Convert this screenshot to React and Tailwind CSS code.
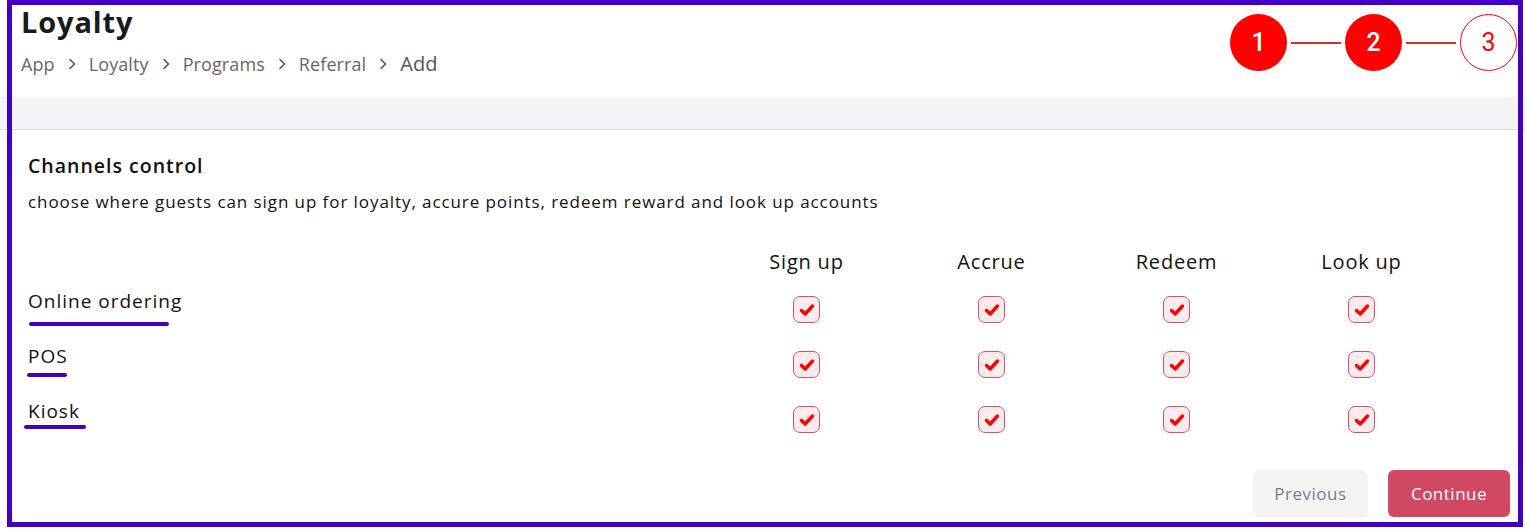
import React from "react";

const font = { fontFamily: '"Open Sans", "Noto Sans", sans-serif' };

function Check() {
  return (
    <div className="w-[27px] h-[27px] rounded-[7px] border-[1.5px] border-[#d9506a] bg-[#fbebee] flex items-center justify-center">
      <svg width="16" height="14" viewBox="0 0 16 14">
        <path d="M2.5 7.5 L6.2 11 L13.5 3" fill="none" stroke="#ff0000" strokeWidth="3.4" strokeLinecap="round" strokeLinejoin="round" />
      </svg>
    </div>
  );
}

function Chevron() {
  return (
    <svg width="10" height="14" viewBox="0 0 10 14" className="mx-[12px]">
      <path d="M3 2.5 L7.5 7 L3 11.5" fill="none" stroke="#555" strokeWidth="1.6" strokeLinecap="round" strokeLinejoin="round" />
    </svg>
  );
}

const rows = [
  { name: "Online ordering", ul: "w-[140px] ml-[1px] mt-[8px]" },
  { name: "POS", ul: "w-[40px] -ml-[1px] mt-[4px]" },
  { name: "Kiosk", ul: "w-[62px] -ml-[4px] mt-[1px]" },
];

export default function App() {
  return (
    <div className="relative w-[1525px] h-[532px] bg-white overflow-hidden text-[#111]" style={font}>
      {/* header */}
      <div className="flex justify-between h-[97px]">
        <div className="pl-[21px] pt-[2px]">
          <div className="text-[29px] font-bold leading-[40px] text-[#1a1a1a] tracking-[0.85px]">Loyalty</div>
          <div className="flex items-center mt-[8px] text-[18px] text-[#666] leading-[28px] tracking-[0.1px]">
            <span>App</span>
            <Chevron />
            <span>Loyalty</span>
            <Chevron />
            <span>Programs</span>
            <Chevron />
            <span>Referral</span>
            <Chevron />
            <span className="text-[20px] text-[#555]">Add</span>
          </div>
        </div>
        <div className="flex items-center pr-[8px] pt-[14px] self-start" style={{ fontFamily: 'Roboto, sans-serif' }}>
          <div className="w-[57px] h-[57px] rounded-full bg-[#ff0000] text-white flex items-center justify-center text-[25px] font-medium">1</div>
          <div className="w-[50px] h-[2px] bg-[#d32f2f] mx-[4px]" />
          <div className="w-[57px] h-[57px] rounded-full bg-[#ff0000] text-white flex items-center justify-center text-[25px] font-medium">2</div>
          <div className="w-[50px] h-[2px] bg-[#d32f2f] mx-[4px]" />
          <div className="w-[57px] h-[57px] rounded-full border border-[#ff0000] bg-white text-[#ff0000] flex items-center justify-center text-[25px]">3</div>
        </div>
      </div>
      <div className="h-[33px] bg-[#f3f4f7] border-b border-[#dcdcdc]" />

      {/* body */}
      <div className="px-[28px] pt-[22px]">
        <div className="text-[19.5px] font-semibold leading-[28px] text-[#111] tracking-[1px]">Channels control</div>
        <div className="text-[17px] leading-[24px] mt-[10px] text-[#111] tracking-[0.92px] whitespace-nowrap">
          choose where guests can sign up for loyalty, accure points, redeem reward and look up accounts
        </div>

        <div className="grid grid-cols-[686px_185px_185px_185px_185px] mt-[34px]">
          <div />
          {["Sign up", "Accrue", "Redeem", "Look up"].map((h) => (
            <div key={h} className="text-center text-[20px] leading-[28px] text-[#111] tracking-[0.8px]">{h}</div>
          ))}
        </div>

        {rows.map((r, i) => (
          <div key={r.name} className={`grid grid-cols-[686px_185px_185px_185px_185px] items-start ${i === 0 ? "mt-[12px]" : "mt-[13px]"} h-[42px]`}>
            <div>
              <div className="text-[19px] leading-[26px] text-[#111] tracking-[1px]">{r.name}</div>
              <div className={`h-[4px] bg-[#4100c4] rounded-sm ${r.ul}`} />
            </div>
            {[0, 1, 2, 3].map((c) => (
              <div key={c} className="flex justify-center pt-[8px]">
                <Check />
              </div>
            ))}
          </div>
        ))}

        <div className="flex justify-end gap-[20px] mt-[30px] mr-[-13px]">
          <button className="w-[115px] h-[47px] rounded-[6px] bg-[#f3f3f3] text-[#777e8a] text-[17px] tracking-[0.5px]">Previous</button>
          <button className="w-[122px] h-[47px] rounded-[6px] bg-[#d14863] text-white text-[17px] tracking-[0.5px]">Continue</button>
        </div>
      </div>

      {/* annotation frame */}
      <div className="absolute left-[7px] top-0 w-[1516px] h-[527px] border-[5px] border-[#4100c4] pointer-events-none" />
    </div>
  );
}
